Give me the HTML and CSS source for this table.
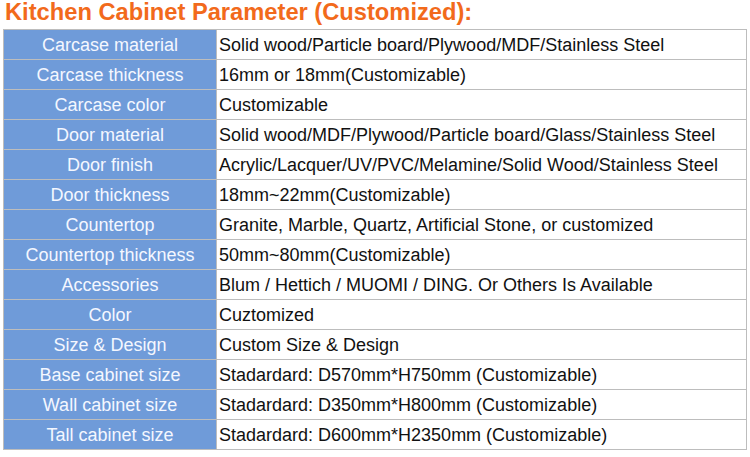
FILE: index.html
```html
<!DOCTYPE html>
<html>
<head>
<meta charset="utf-8">
<link rel="stylesheet" href="styles.css">
</head>
<body>
<div class="page">
  <h1 class="title">Kitchen Cabinet Parameter (Customized):</h1>
  <table class="spec">
    <tr><td class="k">Carcase material</td><td class="v">Solid wood/Particle board/Plywood/MDF/Stainless Steel</td></tr>
    <tr><td class="k">Carcase thickness</td><td class="v">16mm or 18mm(Customizable)</td></tr>
    <tr><td class="k">Carcase color</td><td class="v">Customizable</td></tr>
    <tr><td class="k">Door material</td><td class="v">Solid wood/MDF/Plywood/Particle board/Glass/Stainless Steel</td></tr>
    <tr><td class="k">Door finish</td><td class="v">Acrylic/Lacquer/UV/PVC/Melamine/Solid Wood/Stainless Steel</td></tr>
    <tr><td class="k">Door thickness</td><td class="v">18mm~22mm(Customizable)</td></tr>
    <tr><td class="k">Countertop</td><td class="v">Granite, Marble, Quartz, Artificial Stone, or customized</td></tr>
    <tr><td class="k">Countertop thickness</td><td class="v">50mm~80mm(Customizable)</td></tr>
    <tr><td class="k">Accessories</td><td class="v">Blum / Hettich / MUOMI / DING. Or Others Is Available</td></tr>
    <tr><td class="k">Color</td><td class="v">Cuztomized</td></tr>
    <tr><td class="k">Size &amp; Design</td><td class="v">Custom Size &amp; Design</td></tr>
    <tr><td class="k">Base cabinet size</td><td class="v">Stadardard: D570mm*H750mm (Customizable)</td></tr>
    <tr><td class="k">Wall cabinet size</td><td class="v">Stadardard: D350mm*H800mm (Customizable)</td></tr>
    <tr><td class="k">Tall cabinet size</td><td class="v">Stadardard: D600mm*H2350mm (Customizable)</td></tr>
  </table>
</div>
</body>
</html>
```
FILE: styles.css
```css
html, body {
  margin: 0;
  padding: 0;
  background: #ffffff;
}
.page {
  padding: 0 0 0 3px;
  font-family: "Liberation Sans", Arial, sans-serif;
}
.title {
  margin: -1px 0 0 2px;
  height: 30px;
  font-size: 23.7px;
  line-height: 26px;
  font-weight: bold;
  color: #f26a1b;
}
.spec {
  border-collapse: collapse;
  width: 744px;
  table-layout: fixed;
}
.spec td {
  border: 1px solid #bdbdbd;
  height: 30px;
  padding: 0;
  font-size: 18px;
  line-height: 20px;
  vertical-align: middle;
  box-sizing: border-box;
}
.spec td.k {
  width: 213px;
  background: #6f9bd9;
  color: #f4f7ff;
  text-align: center;
}
.spec td.v {
  background: #ffffff;
  color: #111111;
  padding-left: 2px;
}
```
